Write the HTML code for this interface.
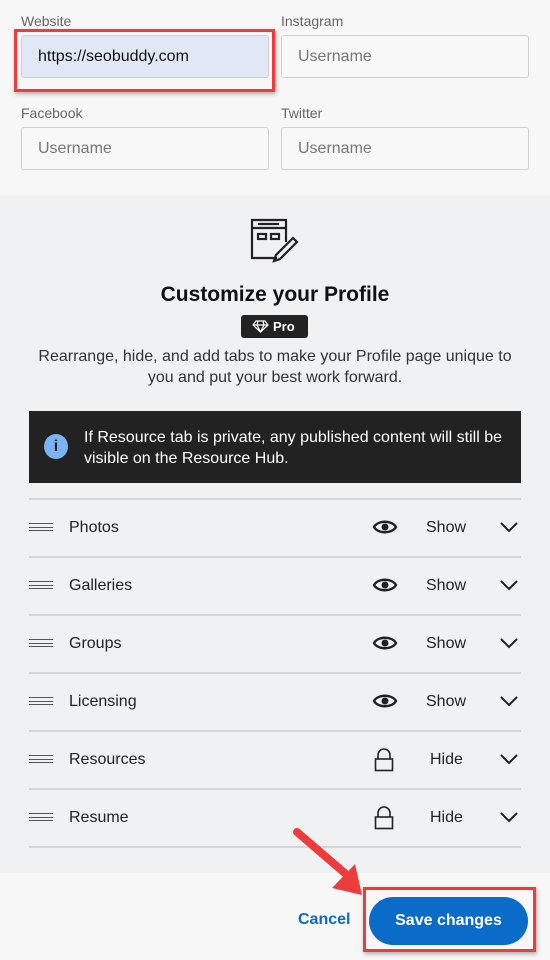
<!DOCTYPE html>
<html><head><style>
*{box-sizing:border-box;margin:0;padding:0}
body{width:550px;height:960px;overflow:hidden;font-family:"Liberation Sans",Arial,sans-serif;background:#f7f7f7;position:relative;color:#222}
.abs{position:absolute}
.lbl{font-size:14px;color:#666}
.inp{position:absolute;height:43px;border:1px solid #d0d0d0;border-radius:3px;background:#f8f8f8;font-size:16px;color:#777;padding:12px 16px}
.mid{position:absolute;left:0;top:195px;width:550px;height:678px;background:#f0f1f3}
.row{position:absolute;left:29px;width:492px;height:58px;border-top:2px solid #d5d5d5}
.row .name{position:absolute;left:40px;top:19px;font-size:16px;color:#222}
.row .st{position:absolute;left:397px;top:19px;font-size:16px;color:#222}
.row .hd{left:401px}
.ham{position:absolute;left:0;top:23px;width:24px;height:8px;border-top:1px solid #555;border-bottom:1px solid #555}
.ham:after{content:"";position:absolute;left:0;top:2.5px;width:24px;border-top:1px solid #555}
.ic{position:absolute;left:343px;top:17px}
.chev{position:absolute;left:470px;top:20px}
</style></head><body>
<div class="abs lbl" style="left:21px;top:13px">Website</div>
<div class="abs lbl" style="left:281px;top:13px">Instagram</div>
<div class="abs lbl" style="left:21px;top:105px">Facebook</div>
<div class="abs lbl" style="left:281px;top:105px">Twitter</div>
<div class="inp" style="left:21px;top:35px;width:248px;background:#e1e8f5;color:#111">https://seobuddy.com</div>
<div class="abs" style="left:14px;top:29px;width:261px;height:63px;border:3px solid #ee3b3b;box-shadow:1px 2px 4px rgba(0,0,0,.3)"></div>
<div class="inp" style="left:281px;top:35px;width:248px">Username</div>
<div class="inp" style="left:21px;top:127px;width:248px">Username</div>
<div class="inp" style="left:281px;top:127px;width:248px">Username</div>
<div class="mid"></div>
<svg class="abs" style="left:249px;top:218px" width="52" height="50" viewBox="0 0 52 50" fill="none" stroke="#222" stroke-width="2.2">
<path d="M28 40H3V2h34v22"/><path d="M3 10h34"/><line x1="9" y1="6" x2="30" y2="6"/>
<rect x="9" y="16" width="8" height="5"/><rect x="22" y="16" width="8" height="5"/>
<path d="M44 20l4 4-17 17-6 2 2-6z"/></svg>
<div class="abs" style="left:0;top:283px;width:550px;text-align:center;font-size:21px;font-weight:bold;color:#111">Customize your Profile</div>
<div class="abs" style="left:241px;top:315px;width:67px;height:23px;background:#222;border-radius:3px;color:#fff;font-weight:bold;font-size:13px;padding:4px 0 0 32px">Pro</div>
<svg class="abs" style="left:252px;top:320px" width="17" height="13" viewBox="0 0 17 13" fill="none" stroke="#fff" stroke-width="1.2"><path d="M4 1h9l3 4-7.5 7L1 5z M1 5h15 M6 1L5 5l3.5 7L12 5 11 1"/></svg>
<div class="abs" style="left:0;top:346px;width:550px;text-align:center;font-size:16px;line-height:21px;color:#333">Rearrange, hide, and add tabs to make your Profile page unique to<br>you and put your best work forward.</div>
<div class="abs" style="left:29px;top:411px;width:492px;height:72px;background:#222"></div>
<div class="abs" style="left:44px;top:434px;width:24px;height:25px;border-radius:50%;background:#7ab4f5;color:#222;font-weight:bold;text-align:center;font-size:16px;line-height:25px">i</div>
<div class="abs" style="left:84px;top:427px;font-size:16px;line-height:21px;color:#fff">If Resource tab is private, any published content will still be<br>visible on the Resource Hub.</div>

<div class="row" style="top:498px"><div class="ham"></div><div class="name">Photos</div><svg class="ic" width="26" height="20" viewBox="0 0 26 20"><path d="M2 10C6 3 20 3 24 10 20 17 6 17 2 10z" fill="none" stroke="#222" stroke-width="2.4"/><circle cx="13" cy="10" r="3.5" fill="#222"/></svg><div class="st">Show</div><svg class="chev" width="20" height="14"><path d="M2 3l8 8 8-8" fill="none" stroke="#222" stroke-width="2"/></svg></div>
<div class="row" style="top:556px"><div class="ham"></div><div class="name">Galleries</div><svg class="ic" width="26" height="20" viewBox="0 0 26 20"><path d="M2 10C6 3 20 3 24 10 20 17 6 17 2 10z" fill="none" stroke="#222" stroke-width="2.4"/><circle cx="13" cy="10" r="3.5" fill="#222"/></svg><div class="st">Show</div><svg class="chev" width="20" height="14"><path d="M2 3l8 8 8-8" fill="none" stroke="#222" stroke-width="2"/></svg></div>
<div class="row" style="top:614px"><div class="ham"></div><div class="name">Groups</div><svg class="ic" width="26" height="20" viewBox="0 0 26 20"><path d="M2 10C6 3 20 3 24 10 20 17 6 17 2 10z" fill="none" stroke="#222" stroke-width="2.4"/><circle cx="13" cy="10" r="3.5" fill="#222"/></svg><div class="st">Show</div><svg class="chev" width="20" height="14"><path d="M2 3l8 8 8-8" fill="none" stroke="#222" stroke-width="2"/></svg></div>
<div class="row" style="top:672px"><div class="ham"></div><div class="name">Licensing</div><svg class="ic" width="26" height="20" viewBox="0 0 26 20"><path d="M2 10C6 3 20 3 24 10 20 17 6 17 2 10z" fill="none" stroke="#222" stroke-width="2.4"/><circle cx="13" cy="10" r="3.5" fill="#222"/></svg><div class="st">Show</div><svg class="chev" width="20" height="14"><path d="M2 3l8 8 8-8" fill="none" stroke="#222" stroke-width="2"/></svg></div>
<div class="row" style="top:730px"><div class="ham"></div><div class="name">Resources</div><svg class="ic" style="left:345px;top:16px" width="20" height="24" viewBox="0 0 20 24" fill="none" stroke="#222" stroke-width="1.6"><path d="M4 11V7a6 6 0 0 1 12 0v4"/><rect x="1.5" y="11" width="17" height="11.5"/></svg><div class="st hd">Hide</div><svg class="chev" width="20" height="14"><path d="M2 3l8 8 8-8" fill="none" stroke="#222" stroke-width="2"/></svg></div>
<div class="row" style="top:788px;height:60px;border-bottom:2px solid #d5d5d5"><div class="ham"></div><div class="name">Resume</div><svg class="ic" style="left:345px;top:16px" width="20" height="24" viewBox="0 0 20 24" fill="none" stroke="#222" stroke-width="1.6"><path d="M4 11V7a6 6 0 0 1 12 0v4"/><rect x="1.5" y="11" width="17" height="11.5"/></svg><div class="st hd">Hide</div><svg class="chev" width="20" height="14"><path d="M2 3l8 8 8-8" fill="none" stroke="#222" stroke-width="2"/></svg></div>

<div class="abs" style="left:298px;top:911px;font-size:16px;font-weight:bold;color:#0a6bc9">Cancel</div>
<div class="abs" style="left:369px;top:897px;width:159px;height:48px;border-radius:24px;background:#0a6bc9;color:#fff;font-weight:bold;font-size:16px;text-align:center;line-height:48px">Save changes</div>
<div class="abs" style="left:363px;top:887px;width:173px;height:65px;border:3px solid #ee3b3b;box-shadow:1px 2px 4px rgba(0,0,0,.3)"></div>
<svg class="abs" style="left:285px;top:820px" width="90" height="80"><line x1="12" y1="12" x2="62" y2="55" stroke="#ee3b3b" stroke-width="8" stroke-linecap="round"/><path d="M47 68L77 75 70 44z" fill="#ee3b3b"/></svg>
</body></html>
